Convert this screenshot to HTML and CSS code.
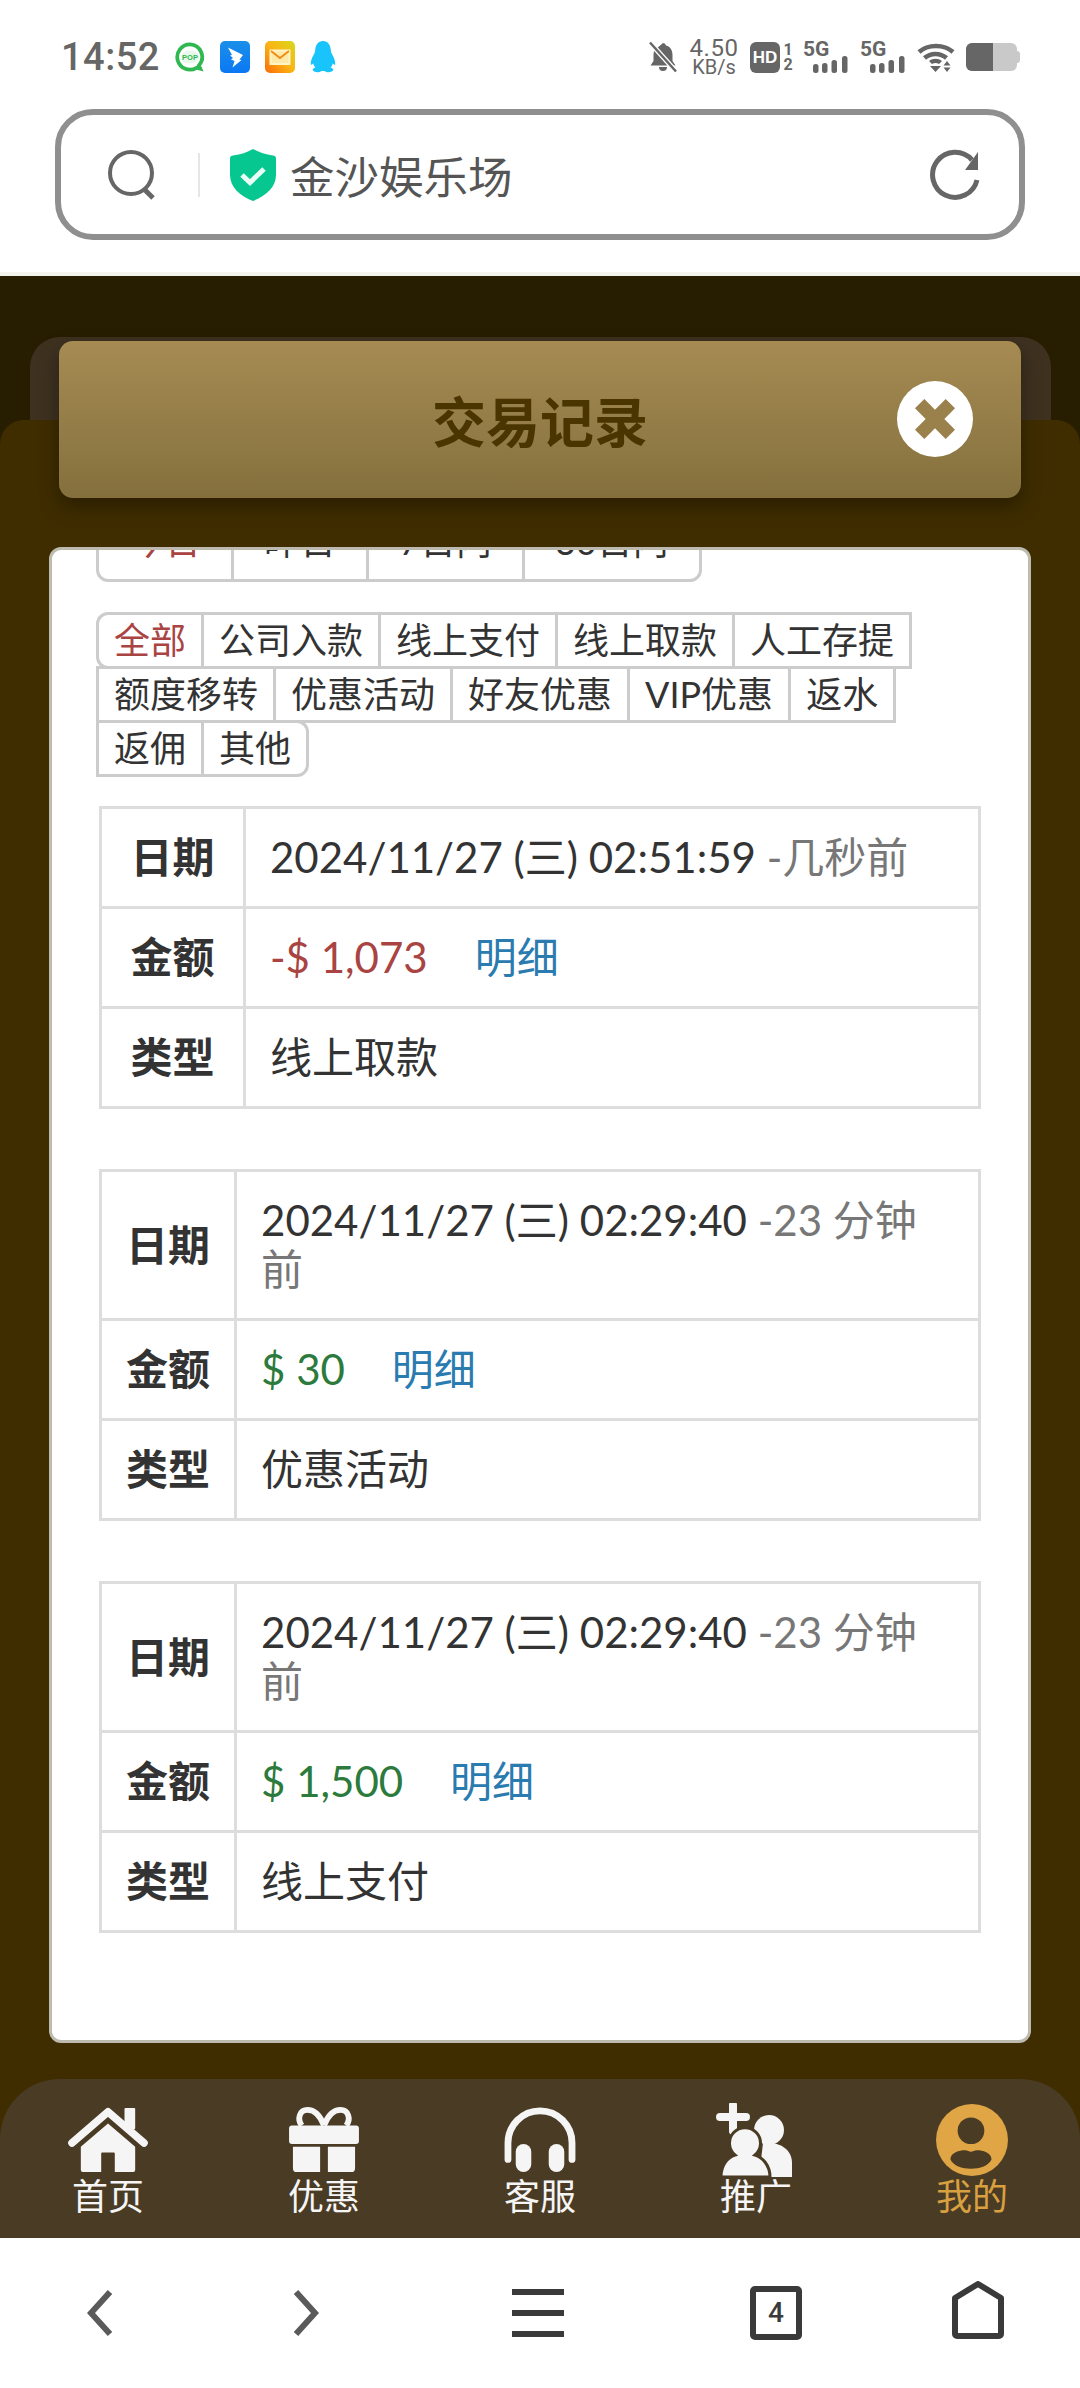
FILE: index.html
```html
<!DOCTYPE html>
<html lang="zh-CN">
<head>
    <meta charset="UTF-8">
    <meta name="viewport" content="width=device-width, initial-scale=1.0">
    <title>交易记录</title>
    <link rel="stylesheet" href="styles.css">
</head>
<body>

    <!-- Phone status bar and browser address bar -->
    <header class="top">
        <div class="status-bar">
            <span class="clock">14:52</span>
            <svg class="app-icon" viewBox="0 0 32 32">
                <path d="M16 2.5a13.5 13.5 0 1 0 7 25l4 1-1.5-3.5A13.5 13.5 0 0 0 16 2.5z" fill="#fff" stroke="#2fb84f" stroke-width="4"/>
                <ellipse cx="16" cy="16" rx="9.5" ry="7" fill="#e9f8ec"/>
                <text x="16" y="18.8" text-anchor="middle" class="pop-text">POP</text>
            </svg>
            <svg class="app-icon" viewBox="0 0 30 32">
                <defs>
                    <linearGradient id="dingBlue" x1="0" y1="0" x2="0" y2="1">
                        <stop offset="0" stop-color="#1a8fe8"/>
                        <stop offset="1" stop-color="#0a78f5"/>
                    </linearGradient>
                    <linearGradient id="mailGold" x1="1" y1="0" x2="0" y2="1">
                        <stop offset="0" stop-color="#d8d81c"/>
                        <stop offset="0.5" stop-color="#fbb414"/>
                        <stop offset="1" stop-color="#fb6a08"/>
                    </linearGradient>
                </defs>
                <rect width="30" height="32" rx="5" fill="url(#dingBlue)"/>
                <path d="M8 6.5l15 7.5-3.5 4.5 2 .5-9 7.5 2-6.5-3.5-1.5 2-1.5-3-2.5 2-.5z" fill="#fff"/>
            </svg>
            <svg class="app-icon" viewBox="0 0 30 32">
                <rect width="30" height="32" rx="5" fill="url(#mailGold)"/>
                <rect x="5.5" y="9.5" width="19" height="13.5" fill="#fde9a8" stroke="#fff3c8" stroke-width="2"/>
                <path d="M6 10l9 7 9-7" fill="none" stroke="#f08a10" stroke-width="1.8"/>
            </svg>
            <svg class="app-icon qq" viewBox="0 0 26 32">
                <path d="M13 0c5 0 7.5 4 7.8 9 .1 2 .6 3 1.7 5 1.6 3 3 6.5 2.7 9-.2 1.3-1.4.7-2.4-.8-.3 1.8-1 3-2.2 4.2 1.8.7 3 1.5 2.7 2.7-.3 1.4-3.8 2.9-6.8 1.9-1-.3-2-.9-3.5-.9s-2.5.6-3.5.9c-3 1-6.5-.5-6.8-1.9-.3-1.2.9-2 2.7-2.7C4.2 25.2 3.5 24 3.2 22.2c-1 1.5-2.2 2.1-2.4.8-.3-2.5 1.1-6 2.7-9 1.1-2 1.6-3 1.7-5C5.5 4 8 0 13 0z" fill="#18c4fb"/>
            </svg>

            <div class="status-right">
                <svg class="bell" viewBox="0 0 30 32">
                    <path d="M15 2a3 3 0 0 1 3 2.5c4.5 1.2 6.5 5 6.5 9.5v6l3 4.5H2.5l3-4.5v-6c0-1.6.2-3 .8-4.4zM11 26h8a4 4 0 0 1-8 0z" fill="#666"/>
                    <path d="M2 1.5l26 29" stroke="#fff" stroke-width="5"/>
                    <path d="M2 1.5l26 29" stroke="#666" stroke-width="2.5"/>
                </svg>
                <div class="net-speed">
                    <span class="speed-num">4.50</span>
                    <span class="speed-unit">KB/s</span>
                </div>
                <span class="hd-badge">HD</span>
                <div class="sim-slots"><span>1</span><span>2</span></div>
                <div class="signal">
                    <span class="signal-label">5G</span>
                    <svg viewBox="0 0 36 18" class="bars">
                        <rect x="0" y="9" width="5.5" height="9" rx="2.5"/><rect x="9" y="8" width="5.5" height="10" rx="2.5"/>
                        <rect x="18.5" y="5" width="5.5" height="13" rx="2.5"/><rect x="29" y="1" width="5.5" height="17" rx="2.5"/>
                    </svg>
                </div>
                <div class="signal">
                    <span class="signal-label">5G</span>
                    <svg viewBox="0 0 36 18" class="bars">
                        <rect x="0" y="9" width="5.5" height="9" rx="2.5"/><rect x="9" y="8" width="5.5" height="10" rx="2.5"/>
                        <rect x="18.5" y="5" width="5.5" height="13" rx="2.5"/><rect x="29" y="1" width="5.5" height="17" rx="2.5"/>
                    </svg>
                </div>
                <svg class="wifi" viewBox="0 0 38 30">
                    <path d="M2 10c9-8 25-8 34 0M7.5 16c6-5.5 16-5.5 22 0" fill="none" stroke="#666" stroke-width="4.5"/>
                    <path d="M12 19c4-3 9-3 13 0l-3 3c-2-1.5-5-1.5-7 0zM13 24h11l-5.5 6z" fill="#666"/>
                    <path d="M30 19l3.5 4.5h-7zM30 30l-3.5-4.5h7z" fill="#666"/>
                </svg>
                <div class="battery">
                    <span class="battery-fill"></span>
                </div>
            </div>
        </div>

        <div class="address-bar">
            <svg class="addr-search" viewBox="0 0 50 50">
                <circle cx="24" cy="23" r="21" fill="none" stroke="#666" stroke-width="4"/>
                <path d="M37 39l9 9" stroke="#666" stroke-width="5"/>
            </svg>
            <span class="addr-divider"></span>
            <svg class="addr-shield" viewBox="0 0 46 52">
                <path d="M23 0c6 3.5 12 5.5 20 6.5 2 .2 3 1.3 3 3V26c0 12-10 21-23 26C10 47 0 38 0 26V9.5c0-1.7 1-2.8 3-3C11 5.5 17 3.5 23 0z" fill="#06c78f"/>
                <path d="M12 26l8 7.5L34 20" fill="none" stroke="#e9fff6" stroke-width="5"/>
            </svg>
            <span class="addr-text">金沙娱乐场</span>
            <svg class="addr-reload" viewBox="0 0 52 52">
                <path d="M48 31A22.5 22.5 0 1 1 43 11" fill="none" stroke="#666" stroke-width="5"/>
                <path d="M49 3v18H36z" fill="#666"/>
            </svg>
        </div>
    </header>

    <main class="page">
        <div class="back-panel"></div>

        <div class="sheet">
            <div class="title-bar">
                <h1>交易记录</h1>
                <button class="close-btn">
                    <svg viewBox="5 5 30 30"><path d="M5 12l7-7 8 8 8-8 7 7-8 8 8 8-7 7-8-8-8 8-7-7 8-8z" fill="#9a804a"/></svg>
                </button>
            </div>

            <!-- Scrolled list: the date tabs are partly under the top edge -->
            <div class="card">
                <div class="date-tabs">
                    <span class="tab active">今日</span>
                    <span class="tab">昨日</span>
                    <span class="tab">7日内</span>
                    <span class="tab">30日内</span>
                </div>

                <div class="filters">
                    <span class="chip active">全部</span>
                    <span class="chip">公司入款</span>
                    <span class="chip">线上支付</span>
                    <span class="chip">线上取款</span>
                    <span class="chip">人工存提</span>
                    <span class="chip">额度移转</span>
                    <span class="chip">优惠活动</span>
                    <span class="chip">好友优惠</span>
                    <span class="chip">VIP优惠</span>
                    <span class="chip">返水</span>
                    <span class="chip">返佣</span>
                    <span class="chip">其他</span>
                </div>

                <table class="record">
                    <tr><th>日期</th><td>2024/11/27 (三) 02:51:59 <span class="ago">-几秒前</span></td></tr>
                    <tr><th>金额</th><td><span class="minus">-$ 1,073</span><a class="detail">明细</a></td></tr>
                    <tr><th>类型</th><td>线上取款</td></tr>
                </table>

                <table class="record">
                    <tr><th>日期</th><td>2024/11/27 (三) 02:29:40 <span class="ago">-23 分钟前</span></td></tr>
                    <tr><th>金额</th><td><span class="plus">$ 30</span><a class="detail">明细</a></td></tr>
                    <tr><th>类型</th><td>优惠活动</td></tr>
                </table>

                <table class="record">
                    <tr><th>日期</th><td>2024/11/27 (三) 02:29:40 <span class="ago">-23 分钟前</span></td></tr>
                    <tr><th>金额</th><td><span class="plus">$ 1,500</span><a class="detail">明细</a></td></tr>
                    <tr><th>类型</th><td>线上支付</td></tr>
                </table>
            </div>

            <!-- Site tab bar -->
            <nav class="tabbar">
                <a class="tabbar-item">
                    <svg viewBox="0 0 82 68">
                        <rect x="58" y="1" width="11" height="22" rx="1" fill="#f5f5f5"/>
                        <path d="M4 37L41 5l37 32" fill="none" stroke="#f5f5f5" stroke-width="8" stroke-linecap="round" stroke-linejoin="round"/>
                        <path d="M41 17l28 24v24a2 2 0 0 1-2 2H48V48a1 1 0 0 0-1-1H35a1 1 0 0 0-1 1v19H15a2 2 0 0 1-2-2V41z" fill="#f5f5f5"/>
                    </svg>
                    <span>首页</span>
                </a>
                <a class="tabbar-item">
                    <svg viewBox="0 0 74 68">
                        <path d="M37 19C33 9 27 3 20 3c-8 0-11 9-6 16M37 19C41 9 47 3 54 3c8 0 11 9 6 16" fill="none" stroke="#f5f5f5" stroke-width="6"/>
                        <rect x="1" y="19" width="72" height="19" rx="3" fill="#f5f5f5"/>
                        <path d="M5 41h28v26H9a4 4 0 0 1-4-4zM41 41h28v22a4 4 0 0 1-4 4H41z" fill="#f5f5f5"/>
                    </svg>
                    <span>优惠</span>
                </a>
                <a class="tabbar-item">
                    <svg viewBox="0 0 74 68">
                        <path d="M4 54V37a33 33 0 0 1 66 0v17" fill="none" stroke="#f5f5f5" stroke-width="7" stroke-linecap="round"/>
                        <rect x="12" y="38" width="16" height="29" rx="8" fill="#f5f5f5"/>
                        <rect x="46" y="38" width="16" height="29" rx="8" fill="#f5f5f5"/>
                    </svg>
                    <span>客服</span>
                </a>
                <a class="tabbar-item">
                    <svg class="tall" viewBox="0 0 74 74">
                        <path d="M14 2v26M1 14h26" stroke="#f5f5f5" stroke-width="8" stroke-linecap="round"/>
                        <circle cx="50" cy="27" r="15" fill="#f5f5f5"/>
                        <path d="M44 40c16-2 29 6 29 20v14H40z" fill="#f5f5f5"/>
                        <path d="M2 74c0-12 7-20 14-22a15.5 15.5 0 1 1 20 0c7 2 15 10 15 22z" fill="#f5f5f5" stroke="#4a3b25" stroke-width="3"/>
                    </svg>
                    <span>推广</span>
                </a>
                <a class="tabbar-item current">
                    <svg class="tall" viewBox="0 0 72 72">
                        <circle cx="36" cy="36" r="35" fill="#e0a545"/>
                        <circle cx="35" cy="27" r="13" fill="#4a3b25"/>
                        <path d="M15 55c0-7 9-9 14-9 3 0 4 1.5 6 1.5s3-1.5 6-1.5c5 0 14 2 14 9-3 6-11 9-20 9s-17-3-20-9z" fill="#4a3b25"/>
                    </svg>
                    <span>我的</span>
                </a>
            </nav>
        </div>
    </main>

    <!-- Browser toolbar -->
    <footer class="browser-nav">
        <svg class="nav-chevron nav-back" viewBox="0 0 26 48">
            <path d="M23 3L4 24l19 21" fill="none" stroke="#5a5a5a" stroke-width="6"/>
        </svg>
        <svg class="nav-chevron nav-forward" viewBox="0 0 26 48">
            <path d="M3 3l19 21L3 45" fill="none" stroke="#5a5a5a" stroke-width="6"/>
        </svg>
        <span class="nav-menu"><i></i><i></i><i></i></span>
        <span class="nav-tabs">4</span>
        <svg class="nav-home" viewBox="0 0 52 58">
            <path d="M26 3L49 17v36a2 2 0 0 1-2 2H5a2 2 0 0 1-2-2V17z" fill="none" stroke="#3a3a3a" stroke-width="6" stroke-linejoin="round"/>
        </svg>
    </footer>

</body>
</html>
```

FILE: styles.css
```css
* {
    box-sizing: border-box;
}

body {
    font-family: Lato, "Noto Sans CJK SC", sans-serif;
    margin: 0;
    width: 1080px;
    height: 2388px;
    display: flex;
    flex-direction: column;
    overflow: hidden;
    background-color: #fff;
    color: #333;
}

/* Status bar and address bar */
.top {
    height: 276px;
    border-bottom: 4px solid #f3f4ee;
}

.status-bar {
    height: 109px;
    padding: 5px 60px 0 61px;
    display: flex;
    align-items: center;
    color: #666;
}

.clock {
    font-family: Roboto, sans-serif;
    font-size: 38px;
    font-weight: 500;
    letter-spacing: 0.5px;
    margin-right: 15px;
}

.app-icon {
    width: 30px;
    height: 32px;
    margin-right: 15px;
}

.app-icon.qq {
    width: 26px;
}

.pop-text {
    font-family: "Liberation Sans", sans-serif;
    font-size: 8px;
    font-weight: bold;
    fill: #2fb84f;
}

.status-right {
    margin-left: auto;
    display: flex;
    align-items: center;
}

.bell {
    width: 30px;
    height: 32px;
    margin-right: 12px;
}

.net-speed {
    display: flex;
    flex-direction: column;
    align-items: center;
    width: 48px;
    font-family: Roboto, sans-serif;
    margin-right: 12px;
}

.speed-num {
    font-size: 24px;
    line-height: 20px;
    letter-spacing: 0.5px;
}

.speed-unit {
    font-size: 20px;
    line-height: 18px;
}

.hd-badge {
    width: 30px;
    height: 31px;
    border-radius: 6px;
    background-color: #666;
    color: #fff;
    font-family: "Liberation Sans", sans-serif;
    font-size: 17px;
    font-weight: bold;
    line-height: 31px;
    text-align: center;
}

.sim-slots {
    display: flex;
    flex-direction: column;
    align-items: center;
    width: 10px;
    margin: 0 10px 0 3px;
    font-family: Roboto, sans-serif;
    font-size: 16px;
    font-weight: 700;
    line-height: 15px;
}

.signal {
    position: relative;
    width: 46px;
    height: 32px;
    margin-right: 11px;
}

.signal-label {
    position: absolute;
    left: 0;
    top: -2px;
    font-family: Roboto, sans-serif;
    font-size: 21px;
    font-weight: 700;
    line-height: 20px;
}

.bars {
    position: absolute;
    right: 0;
    bottom: 0;
    width: 36px;
    height: 18px;
    fill: #666;
}

.wifi {
    width: 38px;
    height: 30px;
    margin-right: 11px;
}

.battery {
    position: relative;
    width: 51px;
    height: 28px;
    margin-right: 3px;
    border-radius: 6px;
    background-color: #c9c9c9;
}

.battery::after {
    content: "";
    position: absolute;
    left: 51px;
    top: 8px;
    width: 3px;
    height: 12px;
    border-radius: 0 3px 3px 0;
    background-color: #c9c9c9;
}

.battery-fill {
    display: block;
    width: 27px;
    height: 28px;
    border-radius: 6px 0 0 6px;
    background-color: #666;
}

.address-bar {
    height: 131px;
    margin: 0 55px;
    padding: 0 38px 0 46px;
    display: flex;
    align-items: center;
    border: 6px solid #8f8f8f;
    border-radius: 38px;
}

.addr-search {
    width: 50px;
    height: 50px;
}

.addr-divider {
    width: 2px;
    height: 44px;
    margin: 0 30px 0 41px;
    background-color: #e6e6e6;
}

.addr-shield {
    width: 46px;
    height: 52px;
    margin-right: 14px;
}

.addr-text {
    font-size: 44.5px;
    font-family: "Noto Sans CJK SC", sans-serif;
    color: #555;
}

.addr-reload {
    width: 52px;
    height: 52px;
    margin-left: auto;
}

/* Dark backdrop with the dialog on it */
.page {
    flex: 1;
    display: flex;
    flex-direction: column;
    padding-top: 61px;
    background-color: #271d00;
}

.back-panel {
    height: 83px;
    margin: 0 29px 0 30px;
    border-radius: 30px 30px 0 0;
    background-color: #3e3120;
}

.sheet {
    flex: 1;
    min-height: 0;
    display: flex;
    flex-direction: column;
    border-radius: 24px 24px 0 0;
    background-color: #3f2d00;
}

.title-bar {
    position: relative;
    height: 157px;
    margin: -79px 59px 0;
    display: flex;
    align-items: center;
    justify-content: center;
    border-radius: 14px;
    background: linear-gradient(#a68b53, #84703d);
    box-shadow: 0 8px 20px rgba(0, 0, 0, 0.35);
}

.title-bar h1 {
    margin: 0;
    font-size: 54px;
    font-weight: bold;
    color: #4a3500;
}

.close-btn {
    position: absolute;
    right: 48px;
    top: 40px;
    width: 76px;
    height: 76px;
    padding: 18px;
    border: 0;
    border-radius: 50%;
    background-color: #fff;
}

.close-btn svg {
    display: block;
}

.card {
    flex: 1;
    min-height: 0;
    margin: 49px 49px 0;
    padding: 0 47px 0 44px;
    overflow: hidden;
    border: 3px solid #bdbbb0;
    border-radius: 12px;
    background-color: #fff;
}

.date-tabs {
    display: flex;
    margin-top: -49px;
}

.tab {
    padding: 12px 30px;
    margin-left: -3px;
    border: 3px solid #ccc;
    font-size: 36px;
    line-height: 51px;
    white-space: nowrap;
}

.tab:first-child {
    margin-left: 0;
    border-radius: 12px 0 0 12px;
}

.tab:last-child {
    border-radius: 0 12px 12px 0;
}

.tab.active, .chip.active {
    color: #a94442;
}

.filters {
    display: flex;
    flex-wrap: wrap;
    margin-top: 33px;
    margin-bottom: 29px;
}

.chip {
    padding: 0 15px;
    margin: -3px 0 0 -3px;
    border: 3px solid #ccc;
    font-size: 36px;
    line-height: 51px;
    white-space: nowrap;
    background-color: #fff;
}

.chip:first-child {
    margin-left: 0;
    border-radius: 12px 0 0 12px;
}

.chip:nth-child(6), .chip:nth-child(11) {
    margin-left: 0;
}

.chip:last-child {
    border-radius: 0 12px 12px 0;
}

.record {
    width: 882px;
    margin: 0 0 60px 3px;
    border-collapse: collapse;
    font-size: 42px;
    line-height: 49px;
}

.record th, .record td {
    padding: 24px;
    border: 3px solid #ddd;
    text-align: left;
}

.record th {
    text-align: center;
    white-space: nowrap;
}

.ago {
    color: #777;
}

.minus {
    color: #a94442;
}

.plus {
    color: #2c7a3c;
}

.detail {
    margin-left: 47px;
    color: #2a7bb0;
}

.tabbar {
    height: 159px;
    margin-top: 36px;
    display: flex;
    border-radius: 60px 60px 0 0;
    background-color: #4a3b25;
}

.tabbar-item {
    flex: 1;
    display: flex;
    flex-direction: column;
    align-items: center;
    padding-top: 28px;
    color: #f5f5f5;
    font-size: 36px;
    line-height: 42px;
}

.tabbar-item svg {
    width: 80px;
    height: 66px;
    margin-bottom: 2px;
}

.tabbar-item svg.tall {
    height: 74px;
    margin-top: -4px;
    margin-bottom: -2px;
}

.tabbar-item.current {
    color: #d9a040;
}

/* Browser toolbar */
.browser-nav {
    height: 150px;
    padding-left: 87px;
    display: flex;
    align-items: center;
    background-color: #fff;
}

.nav-chevron {
    width: 26px;
    height: 48px;
}

.nav-forward {
    margin-left: 180px;
}

.nav-menu {
    width: 52px;
    height: 48px;
    margin-left: 193px;
    display: flex;
    flex-direction: column;
    justify-content: space-between;
}

.nav-menu i {
    display: block;
    height: 6px;
    background-color: #3a3a3a;
}

.nav-tabs {
    width: 52px;
    height: 54px;
    margin-left: 186px;
    border: 6px solid #3a3a3a;
    border-radius: 5px;
    font-family: Roboto, sans-serif;
    font-size: 28px;
    font-weight: 500;
    line-height: 42px;
    text-align: center;
    color: #3a3a3a;
}

.nav-home {
    width: 52px;
    height: 58px;
    margin-left: 150px;
    margin-bottom: 6px;
}
```
